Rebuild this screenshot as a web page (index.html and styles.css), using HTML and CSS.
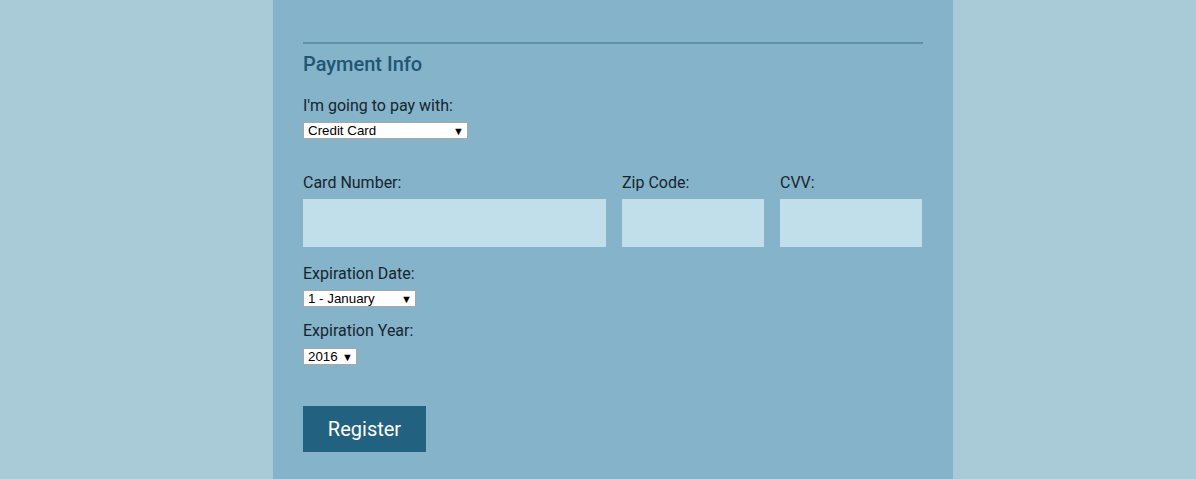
FILE: index.html
```html
<!DOCTYPE html>
<html>
<head>
<meta charset="utf-8">
<link rel="stylesheet" href="styles.css">
</head>
<body>
<main class="panel">
  <hr class="rule">
  <h2 class="title">Payment Info</h2>
  <label class="label">I'm going to pay with:</label>
  <div class="select w-pay"><span>Credit Card</span><span class="arrow">▼</span></div>
  <div class="fields">
    <div class="field">
      <label class="label">Card Number:</label>
      <input class="input" type="text">
    </div>
    <div class="field">
      <label class="label">Zip Code:</label>
      <input class="input" type="text">
    </div>
    <div class="field">
      <label class="label">CVV:</label>
      <input class="input" type="text">
    </div>
  </div>
  <label class="label exp">Expiration Date:</label>
  <div class="select w-month"><span>1 - January</span><span class="arrow">▼</span></div>
  <label class="label exp-year">Expiration Year:</label>
  <div class="select w-year"><span>2016</span><span class="arrow">▼</span></div>
  <button class="btn">Register</button>
</main>
</body>
</html>
```
FILE: styles.css
```css
html, body {
  margin: 0;
  padding: 0;
}
body {
  background: #a9cad7;
  font-family: Roboto, "Liberation Sans", sans-serif;
  height: 479px;
  overflow: hidden;
}
.panel {
  box-sizing: border-box;
  width: 680px;
  margin-left: 273px;
  height: 479px;
  background: #84b3ca;
  padding: 42px 30px 0 30px;
}
.rule {
  margin: 0;
  border: 0;
  height: 2px;
  background: #5e92ab;
}
.title {
  margin: 7px 0 0 0;
  font-size: 20px;
  line-height: 26px;
  font-weight: 500;
  color: #1f5673;
}
.label {
  display: block;
  font-size: 16px;
  line-height: 19px;
  color: #18252e;
}
.title + .label {
  margin-top: 19px;
}
.select {
  margin-top: 7px;
  box-sizing: border-box;
  height: 17px;
  background: #fff;
  border: 1px solid #a7a7a7;
  display: flex;
  align-items: center;
  justify-content: space-between;
  padding: 0 3px 0 4px;
  font-family: "Liberation Sans", Arial, sans-serif;
  font-size: 13.33px;
  color: #000;
}
.arrow {
  font-size: 11px;
}
.w-pay { width: 165px; }
.w-month { width: 113px; }
.w-year { width: 54px; }
.fields {
  margin-top: 34px;
  display: grid;
  grid-template-columns: 303px 142px 142px;
  column-gap: 16px;
}
.input {
  display: block;
  box-sizing: border-box;
  margin-top: 7px;
  width: 100%;
  height: 48px;
  border: 0;
  background: #c1dfea;
  padding: 0;
}
.exp {
  margin-top: 17px;
}
.exp-year {
  margin-top: 14px;
}
.w-year {
  margin-top: 8px;
}
.btn {
  display: block;
  margin-top: 41px;
  width: 123px;
  height: 46px;
  border: 0;
  background: #22617f;
  color: #fff;
  font-family: Roboto, "Liberation Sans", sans-serif;
  font-size: 20px;
  padding: 0;
}
```
